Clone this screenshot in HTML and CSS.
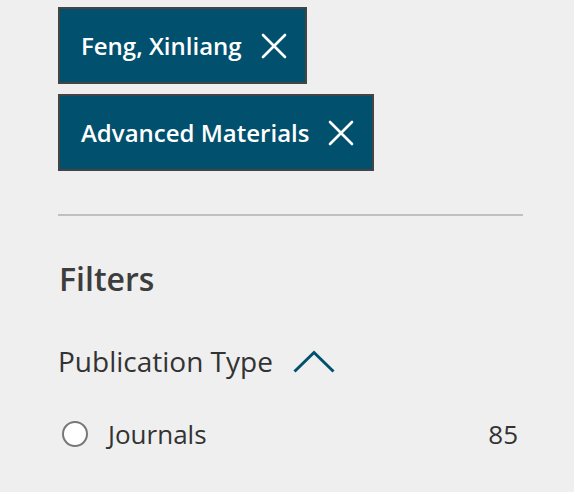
FILE: index.html
```html
<!DOCTYPE html>
<html>
<head>
<meta charset="utf-8">
<link rel="stylesheet" href="styles.css">
</head>
<body>
<div class="panel">
  <div class="tags">
    <button class="tag"><span class="tag-label">Feng, Xinliang</span>
      <svg class="tag-x" viewBox="0 0 26 26" width="26" height="26"><path d="M2 2 L24 24 M24 2 L2 24" stroke="#fff" stroke-width="2.6" stroke-linecap="round" fill="none"/></svg>
    </button>
    <button class="tag"><span class="tag-label">Advanced Materials</span>
      <svg class="tag-x" viewBox="0 0 26 26" width="26" height="26"><path d="M2 2 L24 24 M24 2 L2 24" stroke="#fff" stroke-width="2.6" stroke-linecap="round" fill="none"/></svg>
    </button>
  </div>
  <hr class="divider">
  <h2 class="filters-title">Filters</h2>
  <div class="facet-head">
    <span class="facet-name">Publication Type</span>
    <svg class="chevron" viewBox="0 0 42 23" width="42" height="23"><path d="M1.5 21.5 L21 2.5 L40.5 21.5" stroke="#00506e" stroke-width="3" fill="none"/></svg>
  </div>
  <label class="facet-row">
    <span class="radio"></span>
    <span class="facet-label">Journals</span>
    <span class="facet-count">85</span>
  </label>
</div>
</body>
</html>
```
FILE: styles.css
```css
html, body {
  margin: 0;
  padding: 0;
  background: #efefef;
}
body {
  font-family: "Open Sans", "Noto Sans", sans-serif;
  color: #333;
}
.panel {
  width: 465px;
  padding: 7px 0 0 58px;
}
.tags {
  display: flex;
  flex-direction: column;
  align-items: flex-start;
  gap: 10px;
}
.tag {
  display: inline-flex;
  align-items: center;
  gap: 19px;
  height: 77px;
  box-sizing: border-box;
  padding: 0 18px 0 21px;
  border: 2px solid #444;
  background: #00506e;
  color: #fff;
  font-family: inherit;
  font-weight: 600;
  font-size: 24px;
  cursor: pointer;
}
.tag-label {
  line-height: 1;
}
.tag-x {
  display: block;
}
.divider {
  margin: 43px 0 0;
  border: 0;
  height: 2px;
  background: #c0c0c4;
}
.filters-title {
  margin: 43px 0 0 1px;
  font-size: 32px;
  font-weight: 600;
  line-height: 40px;
  color: #3d3d3d;
}
.facet-head {
  display: flex;
  align-items: center;
  gap: 20px;
  margin-top: 44px;
}
.facet-name {
  font-size: 28px;
  line-height: 36px;
  color: #333;
}
.chevron {
  display: block;
}
.facet-row {
  display: flex;
  align-items: center;
  margin-top: 39px;
  font-size: 26px;
  line-height: 32px;
  color: #333;
}
.radio {
  width: 22px;
  height: 22px;
  border: 2px solid #777;
  border-radius: 50%;
  background: #fff;
  margin-left: 4px;
  flex: none;
}
.facet-label {
  margin-left: 20px;
  flex: 1;
}
.facet-count {
  margin-right: 5px;
}
```
